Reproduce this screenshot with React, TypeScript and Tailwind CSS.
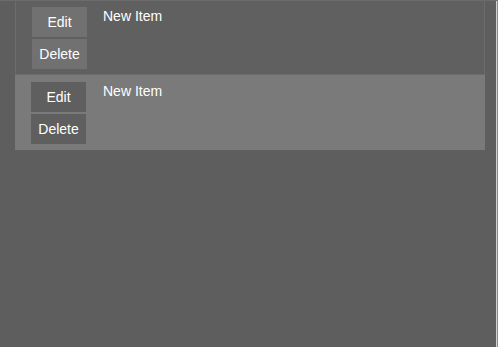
const items = [
  { id: 1, label: 'New Item', selected: false },
  { id: 2, label: 'New Item', selected: true },
];

function ItemRow({ label, selected }: { label: string; selected: boolean }) {
  const btn = selected
    ? 'w-[55px] h-[30px] bg-[#5f5f5f] text-white text-[14px] flex items-center justify-center'
    : 'w-[55px] h-[30px] bg-[#717171] text-white text-[14px] flex items-center justify-center';
  return (
    <div
      className={
        selected
          ? 'flex h-[75px] bg-[#7a7a7a] pl-4 pt-[7px]'
          : 'flex h-[74px] bg-[#606060] border-x border-b border-[#6c6c6c] pl-4 pt-[6px]'
      }
    >
      <div className="flex flex-col gap-[2px]">
        <button className={btn}>Edit</button>
        <button className={btn}>Delete</button>
      </div>
      <div className={selected ? 'ml-[17px] text-white text-[14px] leading-4 pt-[1px]' : 'ml-4 text-white text-[14px] leading-4 pt-[1px]'}>
        {label}
      </div>
    </div>
  );
}

export default function App() {
  return (
    <div
      className="w-[498px] h-[347px] bg-[#5e5e5e] border-t border-[#6b6b6b] border-r border-r-[#8a8a8a] overflow-hidden"
      style={{ fontFamily: '"Liberation Sans", Arial, sans-serif' }}
    >
      <div className="h-full border-r border-[#d2d2d2]">
        <div className="ml-[15px] w-[470px]">
          {items.map((it) => (
            <ItemRow key={it.id} label={it.label} selected={it.selected} />
          ))}
        </div>
      </div>
    </div>
  );
}
